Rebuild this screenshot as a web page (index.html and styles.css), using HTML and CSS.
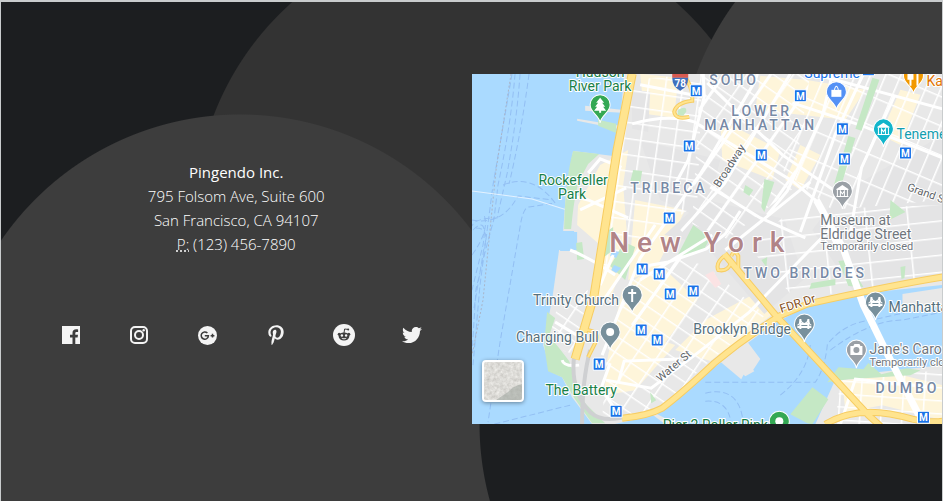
FILE: index.html
```html
<!DOCTYPE html>
<html lang="en">
<head>
<meta charset="utf-8">
<title>Pingendo Inc.</title>
<link rel="stylesheet" href="styles.css">
</head>
<body>
<footer class="contact">
  <div class="info">
    <address class="address">
      <strong>Pingendo Inc.</strong><br>
      795 Folsom Ave, Suite 600<br>
      San Francisco, CA 94107<br>
      <abbr title="Phone">P:</abbr> (123) 456-7890
    </address>
    <nav class="social" aria-label="Social media">
      <a href="#" aria-label="Facebook"><svg width="18" height="18" viewBox="0 0 18 18"><path d="M0 0h18v18h-4.700v-6.500h2.300l.4-2.700h-2.700V7.300c0-.9.4-1.400 1.400-1.400h1.400V3.400c-.4-.1-1.100-.1-1.900-.1-2.300 0-3.700 1.300-3.700 3.700v1.800H8v2.700h2.500V18H0z"/></svg></a>
      <a href="#" aria-label="Instagram"><svg class="line" width="18" height="18" viewBox="0 0 18 18"><rect x="1" y="1" width="16" height="16" rx="4"/><circle cx="9" cy="9" r="4"/><circle class="dot" cx="13.700" cy="4.300" r="1.200"/></svg></a>
      <a href="#" aria-label="Google Plus"><svg width="19" height="19" viewBox="0 0 19 19"><circle cx="9.500" cy="9.500" r="9.500"/><path class="cut" d="M9.400 7.100A3.600 3.600 0 1 0 10.400 9.700H6.800M14.500 7.800v3.800M12.600 9.700h3.800"/></svg></a>
      <a href="#" aria-label="Pinterest"><svg width="16" height="20" viewBox="0 0 384 500"><path d="M204 6.500C101.400 6.500 0 74.900 0 185.600 0 256 39.600 296 63.600 296c9.900 0 15.600-27.600 15.600-35.400 0-9.300-23.700-29.100-23.700-67.800 0-80.400 61.200-137.400 140.400-137.400 68.100 0 118.500 38.700 118.500 109.800 0 53.100-21.300 152.700-90.300 152.700-24.900 0-46.200-18-46.200-43.800 0-37.800 26.400-74.400 26.400-113.400 0-66.200-93.900-54.200-93.900 25.800 0 16.800 2.100 35.400 9.600 50.700-13.800 59.400-42 147.900-42 209.100 0 18.900 2.700 37.500 4.500 56.400 3.400 3.800 1.700 3.400 6.900 1.500 50.400-69 48.600-82.500 71.400-172.800 12.300 23.400 44.100 36 69.300 36 106.200 0 153.900-103.500 153.900-196.800C384 71.300 298.200 6.500 204 6.500z"/></svg></a>
      <a href="#" aria-label="Reddit"><svg width="22" height="22" viewBox="0 0 22 22"><circle cx="11" cy="11" r="11"/><g class="ink"><circle cx="6.200" cy="10.300" r="1.500"/><circle cx="15.800" cy="10.300" r="1.500"/><ellipse cx="11" cy="12.400" rx="5.300" ry="4"/><circle cx="15.200" cy="5.400" r="1"/></g><path class="cut thin" d="M11 9l.6-4 3.400.4"/><circle cx="8.900" cy="11.500" r="1.200"/><circle cx="13.100" cy="11.500" r="1.200"/><path d="M8.500 13.700c1.500.8 3.500.8 5 0-.7 2.100-4.300 2.100-5 0z"/></svg></a>
      <a href="#" aria-label="Twitter"><svg width="20" height="20" viewBox="0 0 512 512"><path d="M459.370 151.716c.325 4.548.325 9.097.325 13.645 0 138.720-105.583 298.558-298.558 298.558-59.452 0-114.680-17.219-161.137-47.106 8.447.974 16.568 1.299 25.340 1.299 49.055 0 94.213-16.568 130.274-44.832-46.132-.975-84.792-31.188-98.112-72.772 6.498.974 12.995 1.624 19.818 1.624 9.421 0 18.843-1.300 27.614-3.573-48.081-9.747-84.143-51.980-84.143-102.985v-1.299c13.969 7.797 30.214 12.670 47.431 13.319-28.264-18.843-46.781-51.005-46.781-87.391 0-19.492 5.197-37.360 14.294-52.954 51.655 63.675 129.300 105.258 216.365 109.807-1.624-7.797-2.599-15.918-2.599-24.040 0-57.828 46.782-104.934 104.934-104.934 30.213 0 57.502 12.670 76.670 33.137 23.715-4.548 46.456-13.320 66.599-25.340-7.798 24.366-24.366 44.833-46.132 57.827 21.117-2.273 41.584-8.122 60.426-16.243-14.292 20.791-32.161 39.308-52.628 54.253z"/></svg></a>
    </nav>
  </div>
  <div class="map">
    <svg class="canvas" viewBox="472 74 470 350" preserveAspectRatio="xMidYMid slice" role="img" aria-label="Map of Lower Manhattan, New York">
      <defs>
        <pattern id="gw" width="17" height="16" patternUnits="userSpaceOnUse" patternTransform="translate(632 74) rotate(8)"><path class="st" d="M0 0h17M0 0v16"/></pattern>
        <pattern id="gs" width="38" height="14" patternUnits="userSpaceOnUse" patternTransform="translate(700 74) rotate(35)"><path class="st" d="M0 0h38M0 0v14M20 0v14"/></pattern>
        <pattern id="gl" width="14" height="27" patternUnits="userSpaceOnUse" patternTransform="translate(800 95) rotate(23)"><path class="st" d="M0 0h14M0 0v27"/></pattern>
        <pattern id="gb" width="42" height="17" patternUnits="userSpaceOnUse" patternTransform="translate(780 220) rotate(-6)"><path class="st" d="M0 0h42M0 0v17"/></pattern>
        <pattern id="gf" width="19" height="14" patternUnits="userSpaceOnUse" patternTransform="translate(630 260) rotate(34)"><path class="st" d="M0 0h19M0 0v14"/></pattern>
        <pattern id="gd" width="21" height="13" patternUnits="userSpaceOnUse" patternTransform="translate(840 380) rotate(4)"><path class="st" d="M0 0h21M0 0v13"/></pattern>
        <path id="pin" d="M0 0C-1-8-10-10-10-18a10 10 0 0 1 20 0C10-10 1-8 0 0z"/>
        <g id="metro"><rect class="mbox" x="-6" y="-6" width="12" height="12" rx="1"/><text class="mtext" y="4">M</text></g>
        <g id="museum"><path d="M-6-20l6-4 6 4v1H-6zM-6-13H6v1H-6z"/><path class="glyph" d="M-5-19v6M5-19v6M-2-13v-5l2 3 2-3v5"/></g>
        <g id="bridge"><path class="glyph bold" d="M-4-23v10M4-23v10M-7-15H7M-4-18H4"/><path class="glyph" d="M-7-17q2 0 3-5 4 7 8 0 1 5 3 5"/></g>
      </defs>
      <rect class="water" x="472" y="74" width="470" height="350"/>
      <g class="ferry">
        <path d="M512 74L493 185 480 285 473 365"/>
        <path d="M515 74q-4 50-17 111l-4 34q-8 28-18 70l-4 64M520 74q-3 45-13 100l-10 44q-22 0-25 8M529 74q-8 60-20 110M473 230q15-15 10 15l-11 45M472 220q30 6 46-24l35 4M476 228q14 0 8 20l-10 60M503 185q30-12 52 18l-26 4q-6 0-9 20l-20 115-12 80M472 255q18-25 12-40"/>
        <path d="M570 405l-80 20M705 382h110q10-15 12-38 18-22 45-24l70-16M705 393q35-8 38 31M705 401q23-2 26 23M780 395q28-22 30-52M830 350q40-30 72-30l40-8"/>
      </g>
      <path class="dots" d="M511 74L496 170 483 300 472 355"/>
      <path class="pale" d="M472 191l60 8 38 12"/>
      <path class="land" d="M624 74H942V285L885 291 820 299 775 323 710 370 662 411 632 420 614 424H592L572 397 562 377 552 372 543 345 552 300 559 250H577V232H563L566 190 573 151 613 156 617 129 577 121V119l42 7 3-13-37-2v-5l36 4z"/>
      <g class="land"><path d="M815 424l25-56 27 5 75-8v59z"/><path d="M902 294l40-6v18l-40 7zM725 354l20-15 15 20-8 12-14-3zM727 359l12-8 15 20-9 5zM718 360l10-5 16 18-3 6zM688 385l14 20M653 412l24 12h-12l-16-12z"/></g>
      <path class="beige" d="M640 74l38 4-4 40-30-4zM600 165l28-15-5 35 5 65-18 50-20-5 10-50-23-20 1-20zM635 200l50 10-30 60-27 10zM760 76l45 4 60 10-20 30-90-10zM720 120l60 30-8 30-50-20zM622 290l35-28 40 38-30 40-48 50-12-30zM610 355l35-20 30 10-40 45-32 5zM675 350l30-30 60-32 5 28-60 45zM870 185l20 3-12 50-20-10zM900 90l20 5-20 50-20-10zM800 145l20 10-20 35-15-10zM842 380l60-5 40 10v35l-60-15-37 7z"/>
      <path class="gray" d="M632 90l18 2-2 40-16-3zM664 235l40-36 80 20 20 60-40 35-60-70zM640 140l80 20-15 60-45-20zM838 195l104-60v142l-90 13-40-60z"/>
      <path fill="url(#gw)" d="M632 80l70-6-5 130-75 50-20 20-4-10 22-110z"/>
      <path fill="url(#gs)" d="M700 74h110l-18 115-65 50-35-15z"/>
      <path fill="url(#gl)" d="M815 74h127v126l-110 10-50-40z"/>
      <path fill="url(#gb)" d="M790 210l152-5v73l-147 21-45-50z"/>
      <path fill="url(#gf)" d="M607 350l28-80 45-10 25 5 60 50-65 54-40 40-58 10z"/>
      <path fill="url(#gf)" d="M558 305l30-15-12 65-12-4-14-20z"/>
      <path fill="url(#gd)" d="M840 378l102-8v54H835z"/>
      <g class="park">
        <path d="M573 151l26 3-11 10-9 17q-5 15-8 48h-7q1-50 9-78zM598 120l18 4v9l-18-7zM693 225l17 13-6 11-28 9zM606 232l7-5v23l-9 7zM624 242l11 5-10 33-15-14zM576 243l6-1 2 17-7 1zM547 312l8 6-6 18 10 12 10 13 8 22 8 20 20 20h-13L575 399l-13-22-14-6-4-26zM633 170l9 1-2 12-10-1z"/>
        <path d="M764 179l10 3-10 30-3-5zM745 185l8 5-4 6-6-4zM890 200l15 12-16 8zM838 261l9-1 16 27-15-1zM811 283l24-4v6l-26 4zM900 267l5-1-1 12-3 1zM790 414l22-27 16 12-16 25-5-1zM827 382l11-15 25 2 5-6 13 11 25-6 14 2-10 5-62 4zM761 260l6-3-1 10zM650 392l6 8-5 3z"/>
      </g>
      <path class="water" d="M561 231h13l-2 20h-12zM612 250l7 2-3 6-6-2zM614 265l7 3-5 5-5-3z"/>
      <path class="hospital" d="M705 275l8-4 8 13-6 4z"/>
      <g class="road">
        <path d="M632 124q35-10 62-2l35 21 63 38 24 20 20 46M703 74L704 97 688 160 673 188M757 74l-2 7-55 93-60 84-38 97M790 74l-66 110-43 47M832 74l-10 42-35 75-20 24M863 74l-28 60-25 70-10 28M894 96l-33 72-12 70M640 85l62 12M707 83l75 72 57 39M792 103l70 23 80 32M813 74l129 35M710 187l50 31 45 20M640 267l28-5 38-13 19-15 15-23M640 280l72-45M725 250l35-28 50-40M600 305l55-80M555 322l30 18M562 360q2 7 17 5M570 250q20 8 45 25M580 210l46-22M573 196l15 4 40 18M610 363l-9 25 13 20M606 380l45 8 50-38 48-38 80-82M618 383l6-22 55-2M632 325l50-70M840 424l15-45 80 8M600 285l13-30M588 173l12-14 20 8-14 35"/>
      </g>
      <path class="park" d="M872 78l7 2-18 51-6-2zM848 136l7 2-16 54-7-2z"/>
      <path class="bridge-road" d="M816 200l27 49 20 56 22 45 38 74"/>
      <path class="rail" d="M574 356q-4 35 16 56 14 12 40 3M590 350q-8 30-8 74"/>
      <path class="edge wide" d="M632 74L617 150 606 220 594 295 575 359"/>
      <path class="edge" d="M724 254l52 62 92 99 12 11M622 418q25-2 40-10 20-15 52-45 30-25 65-47l28-12q85-19 135-27M825 424q20-12 45-12 18 0 42 7 20 4 30 2"/>
      <path class="loop" d="M724 256q-9 7-6 14 10 2 13-8M731 256q3-7 7 0v14M684 76q9 12 8 25-16 2-18 11 1 8 15 5M587 330q14 2 8 13l-7 14"/>
      <path class="hwy wide" d="M632 74L617 150 606 220 594 295 575 359"/>
      <path class="hwy" d="M724 254l52 62 92 99 12 11M622 418q25-2 40-10 20-15 52-45 30-25 65-47l28-12q85-19 135-27M825 424q20-12 45-12 18 0 42 7 20 4 30 2"/>
      <path class="loop-fill" d="M724 256q-9 7-6 14 10 2 13-8M731 256q3-7 7 0v14M684 76q9 12 8 25-16 2-18 11 1 8 15 5M587 330q14 2 8 13l-7 14"/>
      <path class="park" d="M678 110q9-5 8 2l-3 4-6-1z"/>
      <path class="shield-red" d="M672 74h16v4h-16z"/><path class="shield" d="M672 78h16q0 9-8 13-8-4-8-13z"/><text class="shieldtext" x="680" y="87">78</text>
      <g class="pins">
        <use href="#pin" x="600" y="123" fill="#34a853"/><use href="#pin" x="836" y="110" fill="#5491f5"/><use href="#pin" x="913" y="94" fill="#f29900"/><use href="#pin" x="883" y="147" fill="#12b5cb"/><use href="#pin" x="842" y="209" fill="#9aa0a6"/><use href="#pin" x="632" y="313" fill="#78909c"/><use href="#pin" x="610" y="350" fill="#78909c"/><use href="#pin" x="804" y="342" fill="#78909c"/><use href="#pin" x="875" y="320" fill="#78909c"/><use href="#pin" x="856" y="368" fill="#9aa0a6"/><use href="#pin" x="779" y="439" fill="#34a853"/>
      </g>
      <g class="white">
        <path d="M600 98l4 5h-2l3 4h-2l3 4h-5v2h-2v-2h-5l3-4h-2l3-4h-2z"/><path d="M831 90h10v7h-10z"/><circle cx="610" cy="332" r="4"/><circle cx="779" cy="421" r="4"/>
        <path d="M850 346h3l1-2h5l1 2h2v9h-12z"/><circle cx="856" cy="350" r="3" fill="#9aa0a6"/>
        <path class="glyph bold" d="M632 289v13M628 293h8M910 74v12M917 74v12M908 74v5h4v-5"/><path class="glyph" d="M834 90q2-7 4 0"/>
        <use href="#museum" x="883" y="147"/><use href="#museum" x="842" y="209"/><use href="#bridge" x="804" y="342"/><use href="#bridge" x="875" y="320"/>
      </g>
      <g>
        <use href="#metro" x="696" y="91"/><use href="#metro" x="689" y="146"/><use href="#metro" x="761" y="155"/><use href="#metro" x="800" y="96"/><use href="#metro" x="842" y="129"/><use href="#metro" x="844" y="159"/><use href="#metro" x="905" y="153"/><use href="#metro" x="669" y="218"/><use href="#metro" x="642" y="269"/><use href="#metro" x="659" y="274"/><use href="#metro" x="693" y="291"/><use href="#metro" x="670" y="294"/><use href="#metro" x="641" y="330"/><use href="#metro" x="657" y="340"/><use href="#metro" x="599" y="364"/><use href="#metro" x="616" y="411"/><use href="#metro" x="923" y="417"/><use href="#metro" x="868" y="70"/>
      </g>
      <g class="label green mid">
        <text x="600" y="77">Hudson</text><text x="600" y="91">River Park</text><text x="573" y="185">Rockefeller</text><text x="572" y="199">Park</text><text x="581" y="395">The Battery</text><text x="715" y="430">Pier 2 Roller Rink</text>
      </g>
      <g class="label slate">
        <text x="533" y="305">Trinity Church</text><text x="516" y="342">Charging Bull</text><text x="693" y="334">Brooklyn Bridge</text><text x="888" y="312">Manhattan Bridge</text>
      </g>
      <g class="label grey">
        <text x="820" y="225">Museum at</text><text x="820" y="239">Eldridge Street</text><text class="small" x="820" y="250">Temporarily closed</text><text x="869" y="354">Jane's Carousel</text><text class="small" x="869" y="366">Temporarily closed</text>
      </g>
      <g class="label"><text fill="#1a73e8" x="804" y="78">Supreme</text><text fill="#e37400" x="926" y="86">Katz's</text><text fill="#129eaf" x="896" y="139">Tenement Museum</text></g>
      <g class="label street">
        <text transform="translate(719 188) rotate(-57)">Broadway</text><text transform="translate(660 382) rotate(-40)">Water St</text><text transform="translate(906 190) rotate(20)">Grand St</text><text class="brown" transform="translate(781 313) rotate(-18)">FDR Dr</text>
      </g>
      <g class="label area">
        <text x="709" y="85">SOHO</text><text x="731" y="116">LOWER</text><text x="704" y="130">MANHATTAN</text><text x="630" y="193">TRIBECA</text><text x="743" y="278">TWO BRIDGES</text><text x="875" y="393">DUMBO</text>
      </g>
      <text class="label city" x="609" y="252">New York</text>
    </svg>
    <button class="satellite" type="button" aria-label="Show satellite imagery">
      <svg viewBox="0 0 38 38"><filter id="terrain"><feTurbulence type="fractalNoise" baseFrequency=".3" numOctaves="3"/><feColorMatrix values=".4 0 0 0 .52 .4 0 0 0 .51 .4 0 0 0 .48 0 0 0 0 1"/></filter><rect width="38" height="38" filter="url(#terrain)"/><path d="M38 22q-9 2-14 8l-12 8h26z"/></svg>
    </button>
  </div>
</footer>
</body>
</html>
```
FILE: styles.css
```css
* {
  box-sizing: border-box;
}

body {
  margin: 0;
  font-family: "Open Sans", "Noto Sans", sans-serif;
  font-size: 15px;
  line-height: 24px;
  color: #fff;
}

.contact {
  display: grid;
  grid-template-columns: 1fr 1fr;
  align-items: start;
  min-height: 100vh;
  padding: 72px 0;
  border: solid #c9cccd;
  border-width: 2px 1px 0;
  background:
    radial-gradient(circle at 768px 422px, #1c1e20 289px, transparent 290px),
    radial-gradient(circle at 239px 402px, #3d3d3d 289px, transparent 290px),
    radial-gradient(circle at 967px 172px, #3d3d3d 289px, transparent 290px),
    radial-gradient(circle at 483px 217px, #333 289px, transparent 290px),
    #1c1e20;
}

.info {
  padding-top: 86px;
}

.address {
  font-style: normal;
  font-weight: 300;
  text-align: center;
}

.address strong {
  font-weight: 500;
}

.address abbr {
  text-decoration: underline dotted;
}

.social {
  display: grid;
  grid-template-columns: repeat(6, 1fr);
  padding: 68px 25px 0 36px;
}

.social a {
  display: flex;
  align-items: center;
  justify-content: center;
  height: 22px;
}

.social svg {
  fill: #f4f4f4;
}

.social .line {
  fill: none;
  stroke: #f4f4f4;
  stroke-width: 2;
}

.social .dot {
  fill: #f4f4f4;
  stroke: none;
}

.social .cut {
  fill: none;
  stroke: #3d3d3d;
  stroke-width: 1.5;
}

.social .thin {
  stroke-width: 1;
}

.social .ink {
  fill: #3d3d3d;
}

.map {
  position: relative;
  height: 350px;
  overflow: hidden;
}

.canvas {
  display: block;
  width: 100%;
  height: 100%;
}

.water { fill: #aadaff; }
.land { fill: #e8e8e8; }
.beige { fill: #fef5da; }
.gray { fill: #e4e4e5; }
.park { fill: #c5e8c5; }
.hospital { fill: #fbe3e4; }

.st {
  fill: none;
  stroke: #fff;
  stroke-width: 3;
}

.ferry,
.dots,
.pale,
.road,
.bridge-road,
.rail,
.edge,
.hwy,
.loop,
.loop-fill {
  fill: none;
}

.ferry {
  stroke: #93bff3;
  stroke-dasharray: 6 3;
}

.dots {
  stroke: #a9b5c9;
  stroke-dasharray: 2 2;
}

.pale {
  stroke: #e4f2ff;
}

.road {
  stroke: #fff;
  stroke-width: 3;
}

.bridge-road {
  stroke: #fff;
  stroke-width: 7;
}

.rail {
  stroke: #cfd0d2;
  stroke-width: 4;
}

.edge {
  stroke: #f7cd62;
  stroke-width: 7;
}

.hwy {
  stroke: #ffe48f;
  stroke-width: 5;
}

.edge.wide { stroke-width: 9; }
.hwy.wide { stroke-width: 7; }

.loop {
  stroke: #f7cd62;
  stroke-width: 4;
}

.loop-fill {
  stroke: #ffe48f;
  stroke-width: 2;
}

.shield { fill: #3f6fbd; }
.shield-red { fill: #d85a50; }

.pins {
  stroke: #fff;
  stroke-width: 1;
}

.white {
  fill: #fff;
}

.glyph {
  fill: none;
  stroke: #fff;
  stroke-width: 1;
}

.bold {
  stroke-width: 2;
}

.mbox {
  fill: #1a73e8;
  stroke: #fff;
}

.mtext,
.shieldtext {
  font: 700 10px Roboto, sans-serif;
  text-anchor: middle;
  fill: #fff;
}

.label {
  font: 400 14px Roboto, sans-serif;
  paint-order: stroke;
  stroke: #fff;
  stroke-width: 2;
  stroke-linejoin: round;
}

.mid { text-anchor: middle; }
.green { fill: #188048; }
.slate { fill: #56707d; }
.grey { fill: #70767d; }
.small { font-size: 11px; }

.street {
  font-size: 11px;
  fill: #606468;
}

.brown {
  font-size: 12px;
  fill: #85501c;
}

.area {
  font-size: 14px;
  font-weight: 500;
  letter-spacing: 3px;
  fill: #7789a5;
}

.city {
  font-size: 28px;
  font-weight: 500;
  letter-spacing: 8px;
  fill: #b18487;
}

.satellite {
  position: absolute;
  left: 10px;
  bottom: 22px;
  width: 42px;
  height: 42px;
  padding: 0;
  border: 2px solid #fff;
  border-radius: 4px;
  overflow: hidden;
  box-shadow: 0 1px 4px rgba(0, 0, 0, .4);
  cursor: pointer;
}

.satellite svg {
  display: block;
}

.satellite path {
  fill: #a1a8a1;
  opacity: .6;
}
```
